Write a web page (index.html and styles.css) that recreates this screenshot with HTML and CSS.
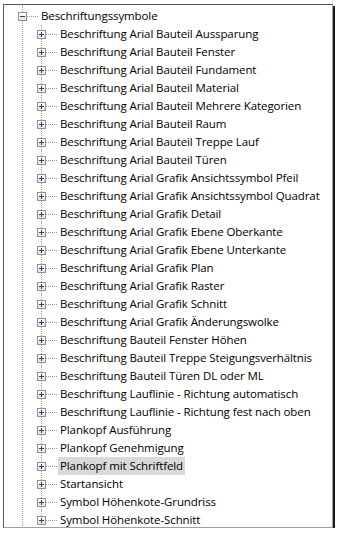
FILE: index.html
```html
<!DOCTYPE html>
<html lang="de">
<head>
<meta charset="utf-8">
<title>Beschriftungssymbole</title>
<link rel="stylesheet" href="styles.css">
</head>
<body>
<div class="tree">
  <div class="row">
    <span class="exp open"><span class="box"></span><span class="hl"></span></span>
    <span class="label">Beschriftungssymbole</span>
  </div>
  <div class="row"><span class="indent"></span><span class="exp"><span class="box"></span><span class="hl"></span></span><span class="label">Beschriftung Arial Bauteil Aussparung</span></div>
  <div class="row"><span class="indent"></span><span class="exp"><span class="box"></span><span class="hl"></span></span><span class="label">Beschriftung Arial Bauteil Fenster</span></div>
  <div class="row"><span class="indent"></span><span class="exp"><span class="box"></span><span class="hl"></span></span><span class="label">Beschriftung Arial Bauteil Fundament</span></div>
  <div class="row"><span class="indent"></span><span class="exp"><span class="box"></span><span class="hl"></span></span><span class="label">Beschriftung Arial Bauteil Material</span></div>
  <div class="row"><span class="indent"></span><span class="exp"><span class="box"></span><span class="hl"></span></span><span class="label">Beschriftung Arial Bauteil Mehrere Kategorien</span></div>
  <div class="row"><span class="indent"></span><span class="exp"><span class="box"></span><span class="hl"></span></span><span class="label">Beschriftung Arial Bauteil Raum</span></div>
  <div class="row"><span class="indent"></span><span class="exp"><span class="box"></span><span class="hl"></span></span><span class="label">Beschriftung Arial Bauteil Treppe Lauf</span></div>
  <div class="row"><span class="indent"></span><span class="exp"><span class="box"></span><span class="hl"></span></span><span class="label">Beschriftung Arial Bauteil Türen</span></div>
  <div class="row"><span class="indent"></span><span class="exp"><span class="box"></span><span class="hl"></span></span><span class="label">Beschriftung Arial Grafik Ansichtssymbol Pfeil</span></div>
  <div class="row"><span class="indent"></span><span class="exp"><span class="box"></span><span class="hl"></span></span><span class="label">Beschriftung Arial Grafik Ansichtssymbol Quadrat</span></div>
  <div class="row"><span class="indent"></span><span class="exp"><span class="box"></span><span class="hl"></span></span><span class="label">Beschriftung Arial Grafik Detail</span></div>
  <div class="row"><span class="indent"></span><span class="exp"><span class="box"></span><span class="hl"></span></span><span class="label">Beschriftung Arial Grafik Ebene Oberkante</span></div>
  <div class="row"><span class="indent"></span><span class="exp"><span class="box"></span><span class="hl"></span></span><span class="label">Beschriftung Arial Grafik Ebene Unterkante</span></div>
  <div class="row"><span class="indent"></span><span class="exp"><span class="box"></span><span class="hl"></span></span><span class="label">Beschriftung Arial Grafik Plan</span></div>
  <div class="row"><span class="indent"></span><span class="exp"><span class="box"></span><span class="hl"></span></span><span class="label">Beschriftung Arial Grafik Raster</span></div>
  <div class="row"><span class="indent"></span><span class="exp"><span class="box"></span><span class="hl"></span></span><span class="label">Beschriftung Arial Grafik Schnitt</span></div>
  <div class="row"><span class="indent"></span><span class="exp"><span class="box"></span><span class="hl"></span></span><span class="label">Beschriftung Arial Grafik Änderungswolke</span></div>
  <div class="row"><span class="indent"></span><span class="exp"><span class="box"></span><span class="hl"></span></span><span class="label">Beschriftung Bauteil Fenster Höhen</span></div>
  <div class="row"><span class="indent"></span><span class="exp"><span class="box"></span><span class="hl"></span></span><span class="label">Beschriftung Bauteil Treppe Steigungsverhältnis</span></div>
  <div class="row"><span class="indent"></span><span class="exp"><span class="box"></span><span class="hl"></span></span><span class="label">Beschriftung Bauteil Türen DL oder ML</span></div>
  <div class="row"><span class="indent"></span><span class="exp"><span class="box"></span><span class="hl"></span></span><span class="label">Beschriftung Lauflinie - Richtung automatisch</span></div>
  <div class="row"><span class="indent"></span><span class="exp"><span class="box"></span><span class="hl"></span></span><span class="label">Beschriftung Lauflinie - Richtung fest nach oben</span></div>
  <div class="row"><span class="indent"></span><span class="exp"><span class="box"></span><span class="hl"></span></span><span class="label">Plankopf Ausführung</span></div>
  <div class="row"><span class="indent"></span><span class="exp"><span class="box"></span><span class="hl"></span></span><span class="label">Plankopf Genehmigung</span></div>
  <div class="row"><span class="indent"></span><span class="exp"><span class="box"></span><span class="hl"></span></span><span class="label selected">Plankopf mit Schriftfeld</span></div>
  <div class="row"><span class="indent"></span><span class="exp"><span class="box"></span><span class="hl"></span></span><span class="label">Startansicht</span></div>
  <div class="row"><span class="indent"></span><span class="exp"><span class="box"></span><span class="hl"></span></span><span class="label">Symbol Höhenkote-Grundriss</span></div>
  <div class="row"><span class="indent"></span><span class="exp last"><span class="box"></span><span class="hl"></span></span><span class="label">Symbol Höhenkote-Schnitt</span></div>
</div>
</body>
</html>
```

FILE: styles.css
```css
html, body {
  margin: 0;
  padding: 0;
  background: #ffffff;
}

body {
  font-family: "Open Sans", "Noto Sans", "Liberation Sans", sans-serif;
  font-size: 11.5px;
  letter-spacing: -0.1px;
  color: #000000;
}

.tree {
  margin: 4px 0 0 3px;
  width: 330px;
  height: 524px;
  box-sizing: border-box;
  border-top: 1px solid #5a5a5a;
  border-left: 1px solid #5a5a5a;
  border-right: 1px solid #a0a0a0;
  border-bottom: 1px solid #a0a0a0;
  box-shadow: 2px 2px 0 #1a1a1a;
  padding: 2px 0 0 9px;
  overflow: hidden;
  background-color: #ffffff;
  background-image: repeating-linear-gradient(to bottom, #a0a0a0 0 1px, transparent 1px 2px);
  background-size: 1px 100%;
  background-position: 18px 0;
  background-repeat: no-repeat;
}

.row {
  display: flex;
  align-items: center;
  height: 18px;
}

.indent {
  flex: 0 0 19px;
  align-self: stretch;
  background-image: repeating-linear-gradient(to bottom, #a0a0a0 0 1px, transparent 1px 2px);
  background-size: 1px 100%;
  background-position: 9px 0;
  background-repeat: no-repeat;
}

.exp {
  flex: 0 0 26px;
  align-self: stretch;
  display: flex;
  align-items: center;
  padding-left: 5px;
  box-sizing: border-box;
  background-image: repeating-linear-gradient(to bottom, #a0a0a0 0 1px, transparent 1px 2px);
  background-size: 1px 100%;
  background-position: 9px 0;
  background-repeat: no-repeat;
}

.exp.last {
  background-size: 1px 9px;
}

.box {
  flex: 0 0 auto;
  width: 9px;
  height: 9px;
  box-sizing: border-box;
  border: 1px solid #919191;
  background-image:
    linear-gradient(#213f8f, #213f8f),
    linear-gradient(#213f8f, #213f8f),
    linear-gradient(to bottom, #ffffff, #e4e4e4);
  background-size: 5px 1px, 1px 5px, 100% 100%;
  background-position: center, center, 0 0;
  background-repeat: no-repeat;
}

.exp.open .box {
  background-size: 5px 1px, 0 0, 100% 100%;
}

.hl {
  flex: 1 1 auto;
  height: 1px;
  background-image: repeating-linear-gradient(to right, #a0a0a0 0 1px, transparent 1px 2px);
}

.label {
  padding: 0 2px;
  line-height: 18px;
  white-space: nowrap;
}

.label.selected {
  background: #d9d9d9;
}
```
